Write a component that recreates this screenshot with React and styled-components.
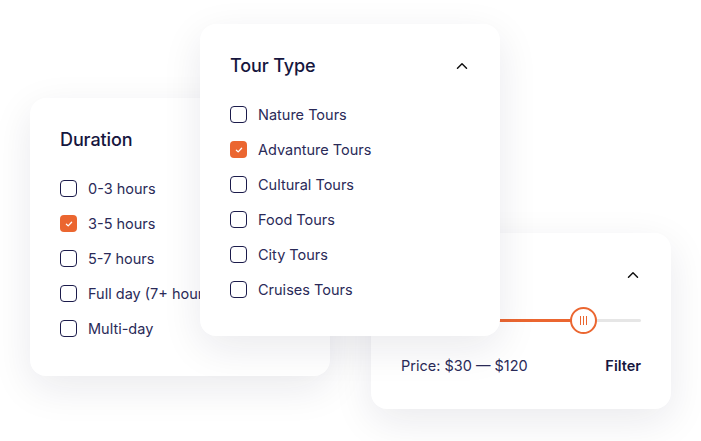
import React from 'react';
import styled, { createGlobalStyle } from 'styled-components';

const GlobalStyle = createGlobalStyle`
  body {
    margin: 0;
    background: #ffffff;
    font-family: "Inter", "Noto Sans", sans-serif;
    color: #1b1b4b;
  }
`

const Canvas = styled.div`
  position: relative;
  width: 701px;
  height: 441px;
  overflow: hidden;
`

// cards float over each other like windows, so they are placed on the canvas
const Card = styled.div`
  position: absolute;
  left: ${p => p.$x}px;
  top: ${p => p.$y}px;
  z-index: ${p => p.$z};
  width: 300px;
  box-sizing: border-box;
  padding: 30px 30px ${p => p.$bottom}px;
  background: #fff;
  border-radius: 16px;
  box-shadow: 0 12px 40px rgba(20, 20, 60, 0.09);
`

const Header = styled.div`
  display: flex;
  align-items: center;
  justify-content: space-between;
  height: 24px;
  margin-bottom: ${p => p.$gap}px;
`

const Title = styled.h3`
  margin: 0;
  font-size: 18px;
  font-weight: 500;
  color: #16163e;
  letter-spacing: -0.1px;
  line-height: 22px;
`

const List = styled.div`
  display: flex;
  flex-direction: column;
  gap: 18px;
`

const Row = styled.label`
  display: flex;
  align-items: center;
  gap: 11px;
  height: 17px;
  font-size: 14.5px;
  color: #2a2a58;
  white-space: nowrap;
`

const Box = styled.span`
  width: 17px;
  height: 17px;
  box-sizing: border-box;
  border-radius: 4px;
  border: ${p => (p.$on ? 'none' : '1.5px solid #1b1b4b')};
  background: ${p => (p.$on ? '#eb6630' : '#fff')};
  display: flex;
  align-items: center;
  justify-content: center;
  flex-shrink: 0;
`

const Slider = styled.div`
  position: relative;
  height: 27px;
  display: flex;
  align-items: center;
  margin-bottom: 21px;
`

const Track = styled.div`
  width: 100%;
  height: 3px;
  border-radius: 2px;
  background: #e6e6e6;
`

const Fill = styled.div`
  height: 100%;
  border-radius: 2px;
  background: #eb6630;
`

const Thumb = styled.div`
  position: absolute;
  top: 0;
  width: 27px;
  height: 27px;
  margin-left: -13.5px;
  box-sizing: border-box;
  border-radius: 50%;
  border: 2px solid #eb6630;
  background: #fff;
  display: flex;
  align-items: center;
  justify-content: center;
  gap: 2px;
`

const Grip = styled.span`
  width: 1.2px;
  height: 9px;
  background: #eb6630;
`

const Footer = styled.div`
  display: flex;
  justify-content: space-between;
  align-items: center;
  height: 20px;
  font-size: 14.5px;
`

const Price = styled.span`
  color: #2a2a58;
`

const FilterBtn = styled.span`
  font-weight: 600;
  color: #16163e;
`

const Chevron = () => (
  <svg width="16" height="16" viewBox="0 0 16 16" fill="none">
    <path d="M3.5 10.2L8 5.8l4.5 4.4" stroke="#111" strokeWidth="1.5" strokeLinecap="round" strokeLinejoin="round" />
  </svg>
)

const Check = () => (
  <svg width="10" height="10" viewBox="0 0 10 10" fill="none">
    <path d="M2.4 5.2l1.8 1.7 3.4-3.6" stroke="#fff" strokeWidth="1.3" strokeLinecap="round" strokeLinejoin="round" />
  </svg>
)

const CheckList = ({ items, checked }) => (
  <List>
    {items.map(item => (
      <Row key={item}>
        <Box $on={item === checked}>{item === checked && <Check />}</Box>
        {item}
      </Row>
    ))}
  </List>
)

const durations = ['0-3 hours', '3-5 hours', '5-7 hours', 'Full day (7+ hours)', 'Multi-day']
const tourTypes = ['Nature Tours', 'Advanture Tours', 'Cultural Tours', 'Food Tours', 'City Tours', 'Cruises Tours']

const App = () => {
  const value = 76
  return (
    <>
      <GlobalStyle />
      <Canvas>
        <Card $x={30} $y={98} $z={1} $bottom={39}>
          <Header $gap={28}>
            <Title>Duration</Title>
            <Chevron />
          </Header>
          <CheckList items={durations} checked="3-5 hours" />
        </Card>

        <Card $x={371} $y={233} $z={1} $bottom={34}>
          <Header $gap={20}>
            <Title>Price</Title>
            <Chevron />
          </Header>
          <Slider>
            <Track>
              <Fill style={{ width: `${value}%` }} />
            </Track>
            <Thumb style={{ left: `${value}%` }}>
              <Grip />
              <Grip />
              <Grip />
            </Thumb>
          </Slider>
          <Footer>
            <Price>Price: $30 — $120</Price>
            <FilterBtn>Filter</FilterBtn>
          </Footer>
        </Card>

        <Card $x={200} $y={24} $z={2} $bottom={38}>
          <Header $gap={28}>
            <Title>Tour Type</Title>
            <Chevron />
          </Header>
          <CheckList items={tourTypes} checked="Advanture Tours" />
        </Card>
      </Canvas>
    </>
  );
};

export default App;
